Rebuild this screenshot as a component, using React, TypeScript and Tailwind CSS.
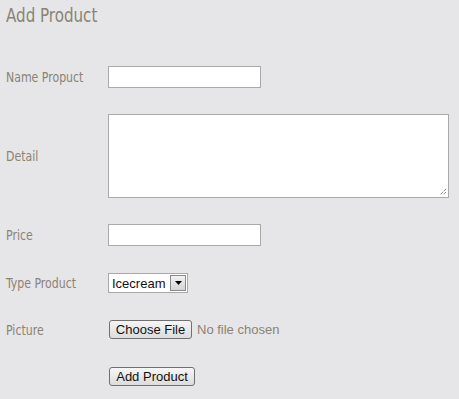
import React from "react";

const labelFont = { fontFamily: '"DejaVu Sans Condensed", "DejaVu Sans", sans-serif' };
const arial = { fontFamily: '"Liberation Sans", Arial, sans-serif' };

function Label({ children }: { children: React.ReactNode }) {
  return (
    <div className="w-[102px] shrink-0 h-[16px] text-[14px] leading-[16px] text-[#8b8373]" style={labelFont}>
      <span className="inline-block origin-left scale-x-[0.87] whitespace-nowrap">{children}</span>
    </div>
  );
}

function OldButton({ children, w }: { children: React.ReactNode; w: string }) {
  return (
    <div
      className={`${w} h-[19px] ml-[1px] flex items-center justify-center rounded-[3px] border border-[#707070] bg-gradient-to-b from-[#f6f6f6] to-[#dcdcdc] text-[13px] text-[#111] leading-none`}
      style={arial}
    >
      {children}
    </div>
  );
}

export default function App() {
  return (
    <div className="w-full h-[399px] bg-[#e6e6e8] pl-[6px] flex flex-col overflow-hidden">
      <div className="h-[66px] pt-[3px]">
        <div className="text-[20px] leading-[24px] text-[#8b8373]" style={labelFont}>
          <span className="inline-block origin-left scale-x-[0.84] whitespace-nowrap">Add Product</span>
        </div>
      </div>

      <div className="flex items-center">
        <Label>Name Propuct</Label>
        <div className="w-[153px] h-[22px] bg-white border border-[#a9a9a9]" />
      </div>

      <div className="flex items-center mt-[26px]">
        <Label>Detail</Label>
        <div className="relative w-[341px] h-[84px] bg-white border border-[#a9a9a9]">
          <svg className="absolute right-[1px] bottom-[1px]" width="8" height="8" viewBox="0 0 8 8">
            <path d="M7 1 L1 7 M7 4 L4 7" stroke="#555" strokeWidth="1" strokeDasharray="1 1" fill="none" />
          </svg>
        </div>
      </div>

      <div className="flex items-center mt-[26px]">
        <Label>Price</Label>
        <div className="w-[153px] h-[22px] bg-white border border-[#a9a9a9]" />
      </div>

      <div className="flex items-center mt-[27px]">
        <Label>Type Product</Label>
        <div className="w-[80px] h-[20px] bg-white border border-[#a9a9a9] flex items-center" style={arial}>
          <span className="flex-1 pl-[3px] text-[13px] text-[#111] leading-none">Icecream</span>
          <div className="w-[16px] h-[16px] mr-[1px] border border-[#8a8a8a] bg-gradient-to-b from-[#f2f2f2] to-[#d4d4d4] flex items-center justify-center">
            <svg width="7" height="4" viewBox="0 0 7 4">
              <path d="M0 0 L7 0 L3.5 4 Z" fill="#000" />
            </svg>
          </div>
        </div>
      </div>

      <div className="flex items-center mt-[27px]">
        <Label>Picture</Label>
        <OldButton w="w-[83px]">Choose File</OldButton>
        <span className="ml-[5px] text-[13px] leading-[16px] text-[#8b8373]" style={arial}>No file chosen</span>
      </div>

      <div className="flex items-center mt-[28px]">
        <div className="w-[102px] shrink-0" />
        <OldButton w="w-[86px]">Add Product</OldButton>
      </div>
    </div>
  );
}
